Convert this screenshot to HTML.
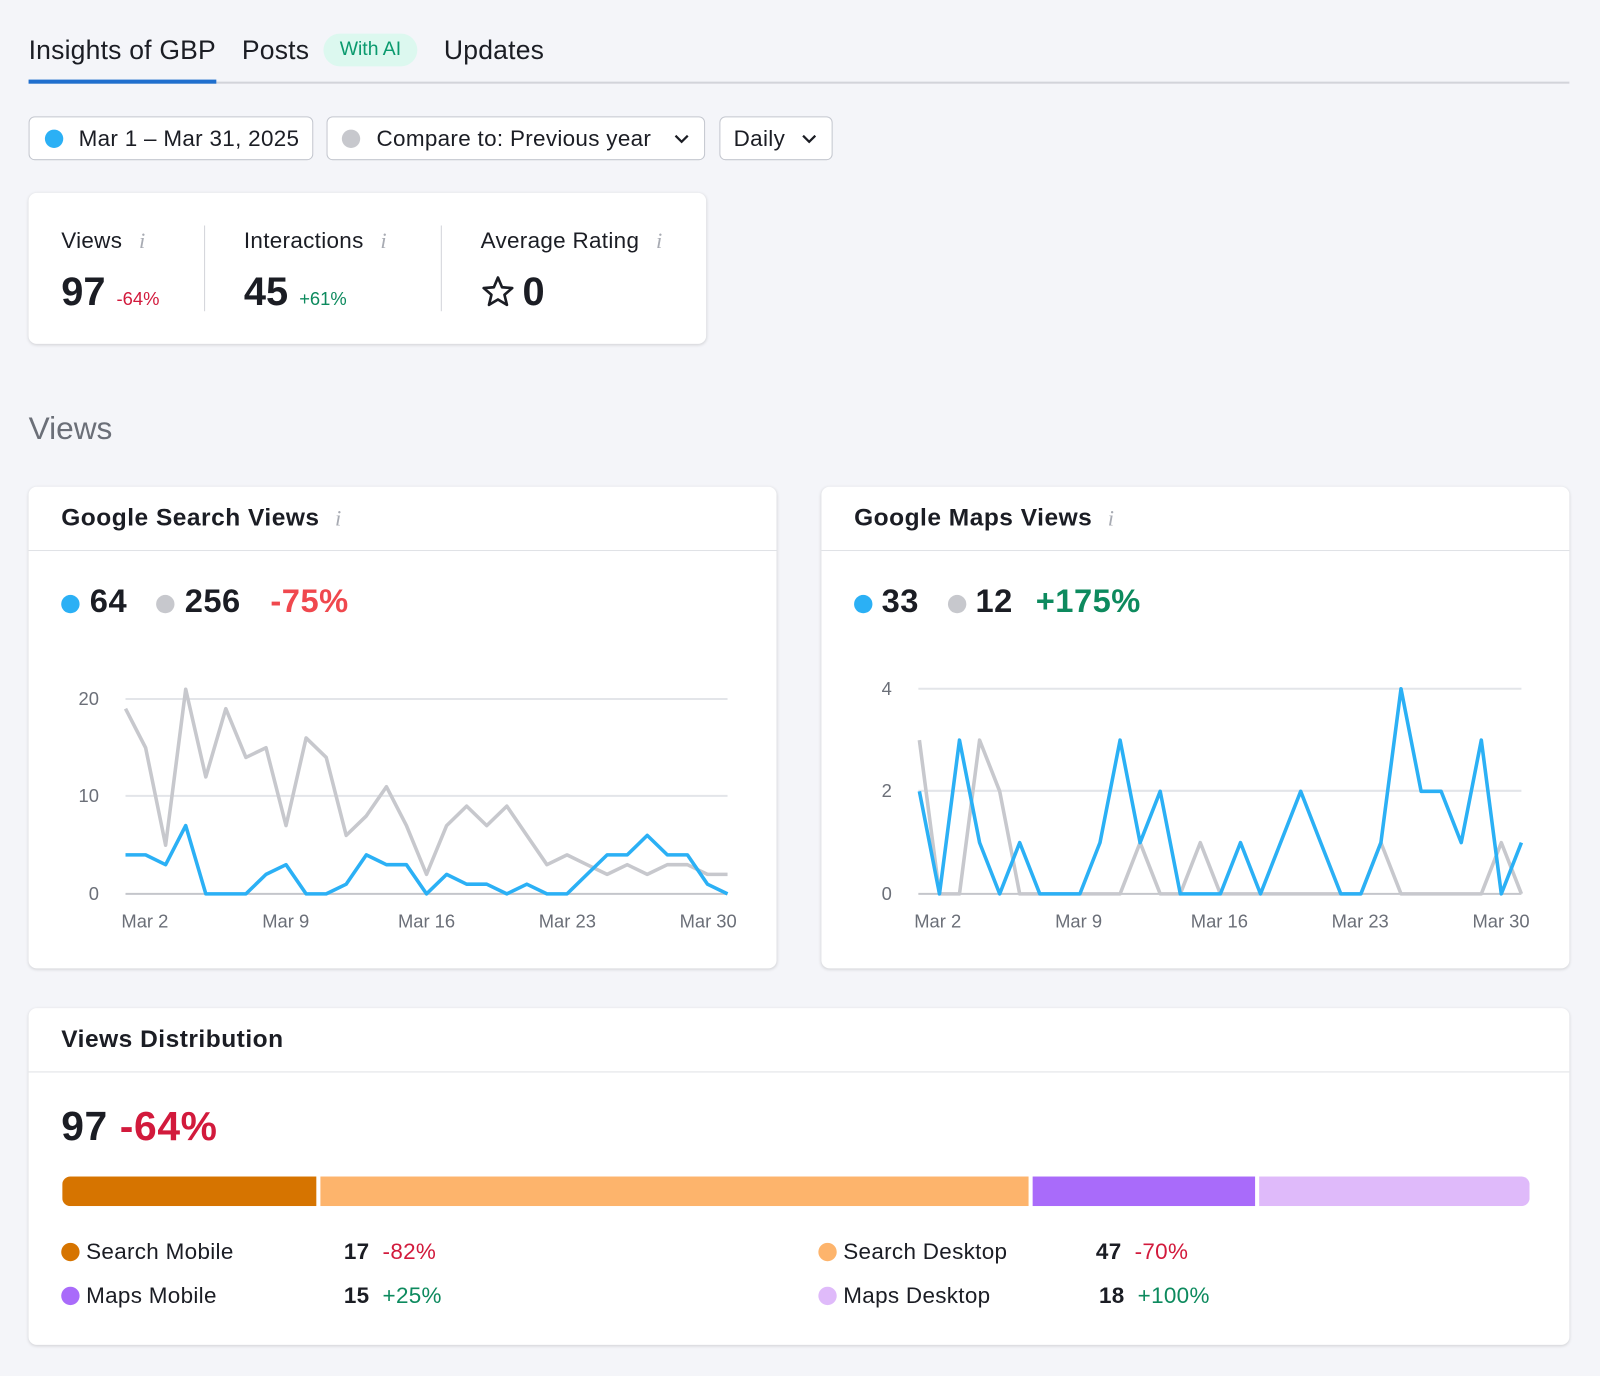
<!DOCTYPE html>
<html><head><meta charset="utf-8"><style>
*{box-sizing:border-box;margin:0;padding:0}
html,body{width:1600px;height:1376px;overflow:hidden;background:#f4f5f9}
body{font-family:"Liberation Sans",sans-serif;color:#1b1d24}
#w{position:absolute;left:0;top:0;width:1568px;height:1348px;transform:scale(1.0204);transform-origin:0 0}
.a{position:absolute;white-space:nowrap}
.card{position:absolute;background:#fff;border-radius:8px;box-shadow:0 1px 3px rgba(0,0,0,.15)}
.btn{position:absolute;top:114px;height:43px;background:#fff;border:1px solid #c4c7cf;border-radius:6px;font-size:22px;line-height:41px;padding-left:48px;letter-spacing:.3px}
.dot{position:absolute;width:18px;height:18px;border-radius:50%}
.i{color:#a8abb3;font-style:italic;font-family:"Liberation Serif",serif;font-size:22px}
.h{font-size:24px;font-weight:bold;letter-spacing:.5px}
.lg{font-size:22px;letter-spacing:.3px}
.big{font-size:32px;font-weight:bold;letter-spacing:.5px}
.tab{font-size:26px;top:34px;letter-spacing:.2px}
</style></head><body><div id="w">
<div class="a tab" style="left:28px">Insights of GBP</div>
<div class="a tab" style="left:237px">Posts</div>
<div class="a" style="left:317px;top:33px;width:92px;height:32px;border-radius:16px;background:#dcf8ef;color:#0a9a6e;font-size:19px;text-align:center;line-height:31px">With AI</div>
<div class="a tab" style="left:435px">Updates</div>
<div class="a" style="left:28px;top:80px;width:1510px;height:2px;background:#d2d4da"></div>
<div class="a" style="left:28px;top:78px;width:184px;height:4px;background:#1f6fce"></div>

<div class="btn" style="left:28px;width:279px"><span class="dot" style="left:15px;top:12px;background:#2bb0f5"></span>Mar 1 – Mar 31, 2025</div>
<div class="btn" style="left:320px;width:371px"><span class="dot" style="left:14px;top:12px;background:#c7c8cd"></span>Compare to: Previous year<svg class="a" style="right:14px;top:16px" width="16" height="10"><path d="M2 2l6 6 6-6" stroke="#1b1d24" stroke-width="2.2" fill="none"/></svg></div>
<div class="btn" style="left:705px;width:111px;padding-left:13px">Daily <svg class="a" style="right:14px;top:16px" width="16" height="10"><path d="M2 2l6 6 6-6" stroke="#1b1d24" stroke-width="2.2" fill="none"/></svg></div>

<div class="card" style="left:28px;top:189px;width:664px;height:148px">
<div class="a lg" style="left:32px;top:34px">Views <span class="i" style="margin-left:10px">i</span></div>
<div class="a" style="left:32px;top:76px;font-size:39px;font-weight:bold">97 <span style="font-size:18px;font-weight:normal;color:#d21a3c">-64%</span></div>
<div class="a" style="left:172px;top:32px;width:1px;height:84px;background:#d2d4da"></div>
<div class="a lg" style="left:211px;top:34px">Interactions <span class="i" style="margin-left:10px">i</span></div>
<div class="a" style="left:211px;top:76px;font-size:39px;font-weight:bold">45 <span style="font-size:18px;font-weight:normal;color:#0d8a5e">+61%</span></div>
<div class="a" style="left:404px;top:32px;width:1px;height:84px;background:#d2d4da"></div>
<div class="a lg" style="left:443px;top:34px">Average Rating <span class="i" style="margin-left:10px">i</span></div>
<svg class="a" style="left:443px;top:80px" width="34" height="32"><path d="M17 3l4 9.5 10 .8-7.6 6.6 2.4 9.9L17 24.5 8.2 29.8l2.4-9.9L3 13.3l10-.8z" fill="none" stroke="#1b1d24" stroke-width="2.6" stroke-linejoin="round"/></svg>
<div class="a" style="left:484px;top:76px;font-size:39px;font-weight:bold">0</div>
</div>

<div class="a" style="left:28px;top:402px;font-size:31px;color:#6b6f78">Views</div>

<div class="card" style="left:28px;top:477px;width:733px;height:472px">
<div class="a h" style="left:32px;top:17px">Google Search Views <span class="i" style="margin-left:8px;font-weight:normal">i</span></div>
<div class="a" style="left:0;top:62px;width:733px;height:1px;background:#e0e2e6"></div>
<span class="dot" style="left:32px;top:106px;background:#2bb0f5"></span>
<div class="a big" style="left:60px;top:94px">64</div>
<span class="dot" style="left:125px;top:106px;background:#c7c8cd"></span>
<div class="a big" style="left:153px;top:94px">256</div>
<div class="a big" style="left:237px;top:94px;color:#f0484e">-75%</div>
</div>
<div class="card" style="left:805px;top:477px;width:733px;height:472px">
<div class="a h" style="left:32px;top:17px">Google Maps Views <span class="i" style="margin-left:8px;font-weight:normal">i</span></div>
<div class="a" style="left:0;top:62px;width:733px;height:1px;background:#e0e2e6"></div>
<span class="dot" style="left:32px;top:106px;background:#2bb0f5"></span>
<div class="a big" style="left:59px;top:94px">33</div>
<span class="dot" style="left:124px;top:106px;background:#c7c8cd"></span>
<div class="a big" style="left:151px;top:94px">12</div>
<div class="a big" style="left:210px;top:94px;color:#0d8a5e">+175%</div>
</div>

<svg class="a" style="left:0;top:0" width="1568" height="960" font-family="Liberation Sans" font-size="18" fill="#6b6f78">
<g stroke="#e3e5e9" stroke-width="2"><line x1="123" y1="685" x2="713" y2="685"/><line x1="123" y1="780" x2="713" y2="780"/><line x1="900" y1="675" x2="1491" y2="675"/><line x1="900" y1="775" x2="1491" y2="775"/></g>
<g stroke="#c4c6cb" stroke-width="2"><line x1="123" y1="876" x2="713" y2="876"/><line x1="900" y1="876" x2="1491" y2="876"/></g>
<text x="97" y="691" text-anchor="end">20</text><text x="97" y="786" text-anchor="end">10</text><text x="97" y="882" text-anchor="end">0</text>
<text x="874" y="681" text-anchor="end">4</text><text x="874" y="781" text-anchor="end">2</text><text x="874" y="882" text-anchor="end">0</text>
<g text-anchor="middle"><text x="142" y="909">Mar 2</text><text x="280" y="909">Mar 9</text><text x="418" y="909">Mar 16</text><text x="556" y="909">Mar 23</text><text x="694" y="909">Mar 30</text>
<text x="919" y="909">Mar 2</text><text x="1057" y="909">Mar 9</text><text x="1195" y="909">Mar 16</text><text x="1333" y="909">Mar 23</text><text x="1471" y="909">Mar 30</text></g>
<g fill="none" stroke-width="3.5" stroke-linejoin="round">
<polyline id="g1" stroke="#c7c8cd" points=""/><polyline id="b1" stroke="#2bb0f5" points=""/>
<polyline id="g2" stroke="#c7c8cd" points=""/><polyline id="b2" stroke="#2bb0f5" points=""/>
</g></svg>

<div class="card" style="left:28px;top:988px;width:1510px;height:330px">
<div class="a h" style="left:32px;top:17px">Views Distribution</div>
<div class="a" style="left:0;top:62px;width:1510px;height:1px;background:#e0e2e6"></div>
<div class="a" style="left:32px;top:94px;font-size:40px;font-weight:bold;letter-spacing:.6px">97 <span style="color:#d21a3c">-64%</span></div>
<div class="a" style="left:33px;top:165px;width:1438px;height:29px;border-radius:8px;overflow:hidden;display:flex;gap:4px">
<div style="width:249px;background:#d67400"></div><div style="width:694px;background:#fdb46c"></div><div style="width:218px;background:#a96bfa"></div><div style="flex:1;background:#dfbafa"></div></div>
<div class="a lg" style="left:32px;top:226px"><span class="dot" style="position:relative;display:inline-block;background:#d67400;top:2px"></span> Search Mobile</div>
<div class="a lg" style="left:309px;top:226px"><b>17</b> &nbsp;<span style="color:#d21a3c">-82%</span></div>
<div class="a lg" style="left:774px;top:226px"><span class="dot" style="position:relative;display:inline-block;background:#fdb46c;top:2px"></span> Search Desktop</div>
<div class="a lg" style="left:1046px;top:226px"><b>47</b> &nbsp;<span style="color:#d21a3c">-70%</span></div>
<div class="a lg" style="left:32px;top:269px"><span class="dot" style="position:relative;display:inline-block;background:#a96bfa;top:2px"></span> Maps Mobile</div>
<div class="a lg" style="left:309px;top:269px"><b>15</b> &nbsp;<span style="color:#0d8a5e">+25%</span></div>
<div class="a lg" style="left:774px;top:269px"><span class="dot" style="position:relative;display:inline-block;background:#dfbafa;top:2px"></span> Maps Desktop</div>
<div class="a lg" style="left:1049px;top:269px"><b>18</b> &nbsp;<span style="color:#0d8a5e">+100%</span></div>
</div>
</div>
<script>
function pts(vals,x0,dx,y0,sc){return vals.map((v,i)=>(x0+i*dx).toFixed(1)+","+(y0-v*sc).toFixed(1)).join(" ")}
var g1=[19,15,5,21,12,19,14,15,7,16,14,6,8,11,7,2,7,9,7,9,6,3,4,3,2,3,2,3,3,2,2];
var b1=[4,4,3,7,0,0,0,2,3,0,0,1,4,3,3,0,2,1,1,0,1,0,0,2,4,4,6,4,4,1,0];
var b2=[2,0,3,1,0,1,0,0,0,1,3,1,2,0,0,0,1,0,1,2,1,0,0,1,4,2,2,1,3,0,1];
var g2=[3,0,0,3,2,0,0,0,0,0,0,1,0,0,1,0,0,0,0,0,0,0,0,1,0,0,0,0,0,1,0];
document.getElementById('g1').setAttribute('points',pts(g1,123,590/30,876,9.55));
document.getElementById('b1').setAttribute('points',pts(b1,123,590/30,876,9.55));
document.getElementById('g2').setAttribute('points',pts(g2,901,590/30,876,50.25));
document.getElementById('b2').setAttribute('points',pts(b2,901,590/30,876,50.25));
</script>
</body></html>
